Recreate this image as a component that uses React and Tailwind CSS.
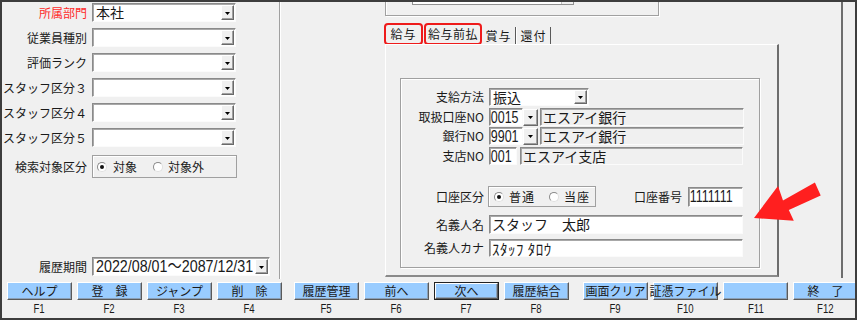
import React from "react";

function Digits({ children, className = "" }) {
  return (
    <span
      className={`inline-block origin-left whitespace-nowrap leading-[17px] font-['Liberation_Sans','Noto_Sans_CJK_JP',sans-serif] ${className}`}
    >
      {children}
    </span>
  );
}

function DropBtn({ className = "" }) {
  return (
    <div
      className={`flex items-center justify-center bg-[#f0f0f0] border border-t-white border-l-white border-r-[#696969] border-b-[#696969] shadow-[inset_-1px_-1px_0_#a0a0a0] ${className}`}
    >
      <svg width="5" height="3" viewBox="0 0 5 3" className="mt-[1px]">
        <path d="M0 0H5L2.5 3Z" fill="#000" />
      </svg>
    </div>
  );
}

function Field({ className = "", children }) {
  return (
    <div
      className={`flex items-center overflow-hidden whitespace-nowrap border border-t-[#8a8a8a] border-l-[#8a8a8a] border-r-[#fbfbfb] border-b-[#fbfbfb] shadow-[inset_1px_1px_0_#a8a8a8] ${className}`}
    >
      {children}
    </div>
  );
}

function Select({ className = "", children }) {
  return (
    <Field className={`bg-white ${className}`}>
      <div className="flex-1 min-w-0 overflow-hidden pl-[3px] leading-[17px] text-[14px] whitespace-nowrap">{children}</div>
      <DropBtn className="self-stretch my-[1px] mr-[1px] w-[13px] shrink-0" />
    </Field>
  );
}

function Radio({ checked }) {
  return (
    <div className="w-[10px] h-[10px] rounded-full border border-t-[#8a8a8a] border-l-[#8a8a8a] border-r-[#e0e0e0] border-b-[#e0e0e0] bg-white flex items-center justify-center">
      {checked && <div className="w-[4px] h-[4px] rounded-full bg-[#111]" />}
    </div>
  );
}

function LeftRow({ label, red, className = "", children }) {
  return (
    <div className={`flex items-center h-[19px] ${className}`}>
      <div
        className={`w-[90px] pr-[5px] flex justify-end whitespace-nowrap text-[12px] leading-none ${red ? "text-[#ff2b2b]" : "text-[#1a1a1a]"}`}
      >
        {label}
      </div>
      {children}
    </div>
  );
}

function LeftPanel() {
  return (
    <div className="w-[277px] flex flex-col pt-[1px] overflow-hidden">
      <LeftRow label="所属部門" red>
        <Select className="w-[144px] h-[19px]">本社</Select>
      </LeftRow>
      <LeftRow label="従業員種別" className="mt-[6px]">
        <Select className="w-[144px] h-[19px]" />
      </LeftRow>
      <LeftRow label="評価ランク" className="mt-[6px]">
        <Select className="w-[144px] h-[19px]" />
      </LeftRow>
      <LeftRow label="スタッフ区分３" className="mt-[6px]">
        <Select className="w-[144px] h-[19px]" />
      </LeftRow>
      <LeftRow label="スタッフ区分４" className="mt-[6px]">
        <Select className="w-[144px] h-[19px]" />
      </LeftRow>
      <LeftRow label="スタッフ区分５" className="mt-[6px]">
        <Select className="w-[144px] h-[19px]" />
      </LeftRow>
      <div className="flex items-center h-[23px] mt-[8px]">
        <div className="w-[90px] pr-[5px] flex justify-end whitespace-nowrap text-[12px] leading-none text-[#1a1a1a]">
          検索対象区分
        </div>
        <div className="w-[145px] h-[23px] border border-[#a0a0a0] shadow-[inset_1px_1px_0_#fff] flex items-center pl-[4px] text-[12px] leading-none">
          <Radio checked />
          <span className="ml-[6px]">対象</span>
          <div className="ml-[16px]">
            <Radio />
          </div>
          <span className="ml-[5px]">対象外</span>
        </div>
      </div>
      <LeftRow label="履歴期間" className="mt-[79px]">
        <Select className="w-[178px] h-[19px]">
          <Digits className="text-[17px] scale-x-[0.84]">2022/08/01～2087/12/31 2</Digits>
        </Select>
      </LeftRow>
    </div>
  );
}

function FormRow({ label, className = "", children }) {
  return (
    <div className={`flex items-center ${className}`}>
      <div className="w-[85px] pr-[2px] flex justify-end whitespace-nowrap text-[12px] leading-none text-[#1a1a1a]">
        {label}
      </div>
      <div className="ml-[3px] flex items-center h-full">{children}</div>
    </div>
  );
}

function Tabs() {
  return (
    <div className="mt-[7px] h-[22px] flex text-[12px] leading-none text-[#1a1a1a]">
      <div className="w-[39px] -ml-px border-2 border-[#ee1b1b] rounded-[4px] flex items-center justify-center tracking-[1px]">
        給与
      </div>
      <div className="w-[58px] ml-px border-2 border-[#ee1b1b] rounded-[4px] flex items-center justify-center tracking-[0.5px]">
        給与前払
      </div>
      <div className="w-[34px] h-[17px] self-end mb-px flex items-center justify-center border-r border-r-[#5a5a5a] tracking-[1px]">
        賞与
      </div>
      <div className="w-[35px] h-[17px] self-end mb-px flex items-center justify-center border-l border-l-white border-r border-r-[#5a5a5a] tracking-[1px]">
        還付
      </div>
    </div>
  );
}

function TabPanel() {
  return (
    <div className="-mt-px h-[233px] w-[394px] border-t border-l border-t-white border-l-white border-r-2 border-r-[#6d6d6d] border-b-2 border-b-[#8a8a8a]">
      <div className="ml-[14px] mt-[33px] w-[360px] h-[190px] border border-[#a0a0a0] shadow-[inset_1px_1px_0_#fff,1px_1px_0_#fff] flex flex-col">
        <FormRow label="支給方法" className="mt-[9px] h-[18px]">
          <Select className="w-[100px] h-[18px]">振込</Select>
        </FormRow>
        <FormRow label="取扱口座NO" className="mt-[2px] h-[18px]">
          <Field className="w-[34px] h-[18px] bg-white">
            <Digits className="pl-[1px] text-[16px] scale-x-[0.78]">0015</Digits>
          </Field>
          <DropBtn className="w-[15px] h-[17px]" />
          <Field className="ml-[2px] w-[204px] h-[18px] bg-[#f0f0f0]">
            <span className="pl-[2px] text-[14px] leading-[17px]">エスアイ銀行</span>
          </Field>
        </FormRow>
        <FormRow label="銀行NO" className="mt-[1px] h-[18px]">
          <Field className="w-[34px] h-[18px] bg-white">
            <Digits className="pl-[1px] text-[16px] scale-x-[0.78]">9901</Digits>
          </Field>
          <DropBtn className="w-[15px] h-[17px]" />
          <Field className="ml-[2px] w-[204px] h-[18px] bg-[#f0f0f0]">
            <span className="pl-[2px] text-[14px] leading-[17px]">エスアイ銀行</span>
          </Field>
        </FormRow>
        <FormRow label="支店NO" className="mt-[2px] h-[18px]">
          <Field className="w-[28px] h-[18px] bg-white">
            <Digits className="pl-[1px] text-[16px] scale-x-[0.78]">001</Digits>
          </Field>
          <Field className="ml-[3px] w-[223px] h-[18px] bg-[#f0f0f0]">
            <span className="pl-[2px] text-[14px] leading-[17px]">エスアイ支店</span>
          </Field>
        </FormRow>
        <FormRow label="口座区分" className="mt-[21px] h-[21px]">
          <div className="-ml-px w-[108px] h-[21px] border border-[#a0a0a0] shadow-[inset_1px_1px_0_#fff] flex items-center pl-[5px] text-[12px] leading-none">
            <Radio checked />
            <span className="ml-[5px] tracking-[1px]">普通</span>
            <div className="ml-[14px]">
              <Radio />
            </div>
            <span className="ml-[5px] tracking-[1px]">当座</span>
          </div>
          <div className="w-[92px] flex justify-end pr-[6px] text-[12px] leading-none">口座番号</div>
          <Field className="w-[55px] h-[20px] bg-white">
            <Digits className="pl-[1px] text-[16px] scale-x-[0.78]">1111111</Digits>
          </Field>
        </FormRow>
        <FormRow label="名義人名" className="mt-[8px] h-[19px]">
          <Field className="w-[254px] h-[19px] bg-white">
            <span className="pl-[2px] text-[14px] leading-[17px]">スタッフ　太郎</span>
          </Field>
        </FormRow>
        <FormRow label="名義人カナ" className="mt-[5px] h-[18px]">
          <Field className="w-[254px] h-[18px] bg-white">
            <span className="pl-[2px] text-[15px] leading-[17px] tracking-[0.5px]">ｽﾀｯﾌ ﾀﾛｳ</span>
          </Field>
        </FormRow>
      </div>
    </div>
  );
}

function RightArea() {
  return (
    <div className="flex-1 flex">
      <div className="ml-[104px] w-[394px] flex flex-col">
        <div className="w-[274px] h-[14px] border-l border-r border-b border-[#a0a0a0] shadow-[inset_1px_0_0_#fff,1px_1px_0_#fff]">
          <div className="ml-[26px] w-[162px] h-[3px] border-l border-r border-b border-[#909090] bg-white flex justify-end">
            <div className="w-[12px] h-full bg-[#f0f0f0] border-l border-[#c0c0c0]" />
          </div>
        </div>
        <Tabs />
        <TabPanel />
      </div>
      <div className="ml-[62px] w-[2px] h-[276px] bg-[#6d6d6d]" />
    </div>
  );
}

function FBtn({ label, f, focus, className = "" }) {
  return (
    <div className={`w-[65px] shrink-0 flex flex-col items-center ${className}`}>
      <div className={`w-full h-[18px] ${focus ? "border border-[#222]" : ""}`}>
        <div className="w-full h-full bg-[#99ccff] border border-t-white border-l-white border-r-[#5a5a5a] border-b-[#5a5a5a] shadow-[inset_-1px_-1px_0_#8aa0b8] flex items-center justify-center text-[12px] leading-none text-[#1a1a1a] whitespace-nowrap">
          {label}
        </div>
      </div>
      <div className="mt-[3px] h-[13px] flex justify-center">
        <span className="inline-block origin-center scale-x-[0.8] text-[12px] leading-[13px] text-[#1a1a1a] font-['Liberation_Sans',sans-serif]">
          {f}
        </span>
      </div>
    </div>
  );
}

function Toolbar() {
  return (
    <div className="h-[39px] pt-[3px] pl-[5px] flex items-start overflow-hidden">
      <FBtn label="ヘルプ" f="F1" />
      <FBtn label="登　録" f="F2" className="ml-[5px]" />
      <FBtn label="ジャンプ" f="F3" className="ml-[5px]" />
      <FBtn label="削　除" f="F4" className="ml-[5px]" />
      <FBtn label="履歴管理" f="F5" className="ml-[12px]" />
      <FBtn label="前へ" f="F6" className="ml-[5px]" />
      <FBtn label="次へ" f="F7" focus className="ml-[5px]" />
      <FBtn label="履歴結合" f="F8" className="ml-[5px]" />
      <FBtn label="画面クリア" f="F9" className="ml-[14px]" />
      <FBtn label="証憑ファイル" f="F10" className="ml-[5px]" />
      <FBtn label="" f="F11" className="ml-[5px]" />
      <FBtn label="終　了" f="F12" className="ml-[5px]" />
    </div>
  );
}

export default function App() {
  return (
    <div className="w-[859px] h-[323px] bg-white relative overflow-hidden font-['Noto_Sans_CJK_JP',sans-serif] text-[#1a1a1a]">
      <div className="w-[857px] h-[320px] border-2 border-[#3d3d3d] bg-[#f0f0f0] flex flex-col overflow-hidden">
        <div className="h-[277px] flex">
          <LeftPanel />
          <div className="w-px bg-[#a0a0a0]" />
          <div className="w-px bg-white" />
          <RightArea />
        </div>
        <Toolbar />
      </div>
      <svg className="absolute left-0 top-0 pointer-events-none" width="859" height="323" viewBox="0 0 859 323">
        <polygon
          points="754,218 778,186 783,200.6 814.9,182.6 820.7,195.4 788.8,209.9 793.8,220.8"
          fill="#ff1f1f"
        />
      </svg>
    </div>
  );
}
